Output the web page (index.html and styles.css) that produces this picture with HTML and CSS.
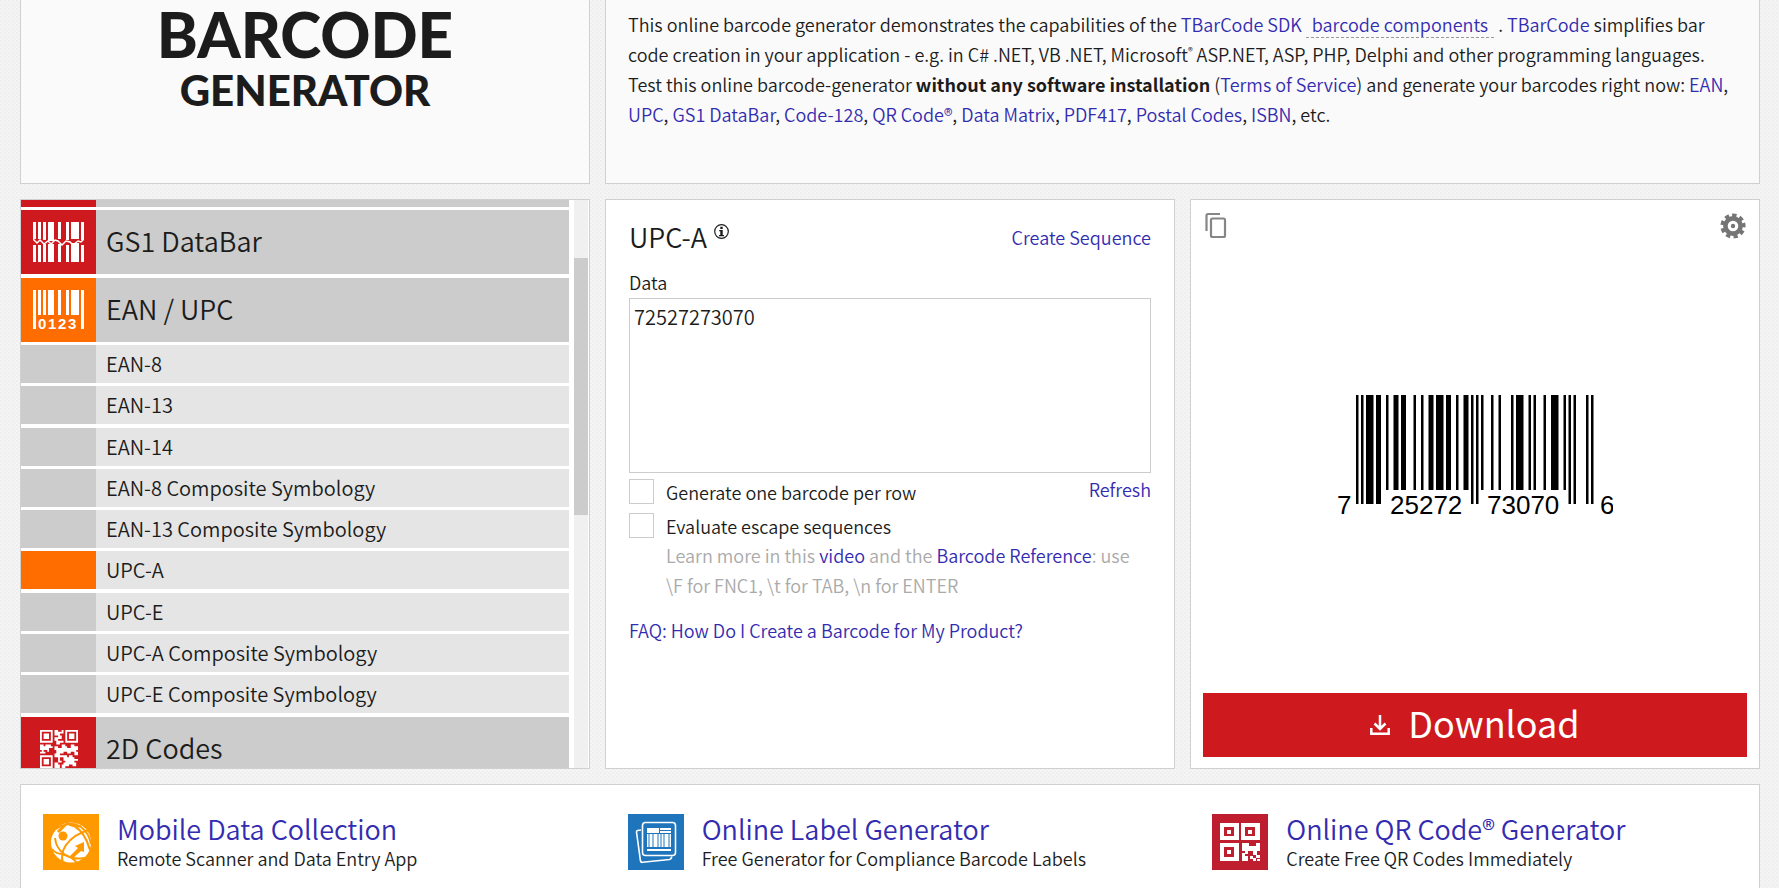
FILE: index.html
```html
<!DOCTYPE html>
<html lang="en">
<head>
<meta charset="utf-8">
<title>Barcode Generator</title>
<link rel="stylesheet" href="styles.css">
</head>
<body>
<main class="page">
  <section class="row intro">
    <header class="panel soft brand">
      <h1 class="brand-title"><span class="brand-big">BARCODE</span><span class="brand-small">GENERATOR</span></h1>
    </header>
    <div class="panel soft about">
      <p>This online barcode generator demonstrates the capabilities of the <a href="#">TBarCode SDK</a> <a class="dashed" href="#">barcode components</a> . <a href="#">TBarCode</a> simplifies bar code creation in your application - e.g. in C# .NET, VB .NET, Microsoft<sup class="reg">®</sup> ASP.NET, ASP, PHP, Delphi and other programming languages. Test this online barcode-generator <strong>without any software installation</strong> (<a href="#">Terms of Service</a>) and generate your barcodes right now: <a href="#">EAN</a>, <a href="#">UPC</a>, <a href="#">GS1 DataBar</a>, <a href="#">Code-128</a>, <a href="#">QR Code®</a>, <a href="#">Data Matrix</a>, <a href="#">PDF417</a>, <a href="#">Postal Codes</a>, <a href="#">ISBN</a>, etc.</p>
    </div>
  </section>

  <section class="row tools">
    <nav class="panel types">
      <ul class="groups">
        <li class="group red"><span class="mark"></span><span class="name"></span></li>
        <li class="group red">
          <span class="mark">
            <svg width="51" height="40" viewBox="0 0 51 40" fill="#fff">
              <path d="M0 0h3v17H0zM5 0h3v17H5zM10 0h3v18h-3zM15 0h6v19h-6zM25 0h3v17h-3zM33 0h3v18h-3zM38 0h8v17h-8zM48 0h3v18h-3zM0 23h3v17H0zM5 23h3v17H5zM10 22h3v18h-3zM15 22h6v18h-6zM25 22h3v18h-3zM33 23h3v17h-3zM38 21h8v19h-8zM48 23h3v17h-3z"/>
              <path d="M0 17l4 4 3-3 4 4 4-3 3 3 4-4 3 1 4 4 4-4 4 1 3 3 5-4 3 1 3-3" fill="none" stroke="#fff" stroke-width="1.500"/>
            </svg>
          </span>
          <span class="name">GS1 DataBar</span>
        </li>
        <li class="group orange">
          <span class="mark">
            <svg width="51" height="40" viewBox="0 0 51 40" fill="#fff">
              <path d="M0 0h3v39H0zM5 0h3v25H5zM10 0h3v25h-3zM15 0h6v25h-6zM25 0h3v25h-3zM33 0h3v25h-3zM38 0h8v25h-8zM48 0h3v39h-3z"/>
              <text class="mark-digits" x="5 15 25 35" y="39">0123</text>
            </svg>
          </span>
          <span class="name">EAN / UPC</span>
        </li>
        <li>
          <ul class="subs">
            <li class="sub"><span class="mark"></span><span class="name">EAN-8</span></li>
            <li class="sub"><span class="mark"></span><span class="name">EAN-13</span></li>
            <li class="sub"><span class="mark"></span><span class="name">EAN-14</span></li>
            <li class="sub"><span class="mark"></span><span class="name">EAN-8 Composite Symbology</span></li>
            <li class="sub"><span class="mark"></span><span class="name">EAN-13 Composite Symbology</span></li>
            <li class="sub current"><span class="mark"></span><span class="name">UPC-A</span></li>
            <li class="sub"><span class="mark"></span><span class="name">UPC-E</span></li>
            <li class="sub"><span class="mark"></span><span class="name">UPC-A Composite Symbology</span></li>
            <li class="sub"><span class="mark"></span><span class="name">UPC-E Composite Symbology</span></li>
          </ul>
        </li>
        <li class="group red">
          <span class="mark">
            <svg width="38" height="38" viewBox="0 0 21 21" fill="#fff" fill-rule="evenodd">
              <path d="M0 0h7v7H0zM1 1v5h5V1zM2 2h3v3H2zM14 0h7v7h-7zM15 1v5h5V1zM16 2h3v3h-3zM0 14h7v7H0zM1 15v5h5v-5zM2 16h3v3H2z"/>
              <path d="M8 0h2v1h2V0h1v2h-2v1h1v2h-2v1h3v1h-2v1h-2V6H8V4h2V3H8zM0 8h2v1h1V8h3v1h1v1H5v2H4v-1H2v1h1v1H0v-1h1v-1H0zM8 9h2v1h2V8h2v1h1v1h2V8h2v1h2v2h-1v1h1v2h-2v-2h-2v1h-2v-1h-2v1h-2v1h2v1h-2v2h1v1h-2v-3H8v-2h1v-2H8zM13 14h2v1h1v-1h2v1h1v1h2v1h-2v1h1v2h-2v-1h-2v1h-2v-1h-1v-1h1v-1h-1zM8 18h2v1h1v2H8zM12 19h2v2h-2z"/>
            </svg>
          </span>
          <span class="name">2D Codes</span>
        </li>
      </ul>
      <div class="track"><div class="thumb"></div></div>
    </nav>

    <form class="panel editor">
      <div class="line editor-head">
        <h2 class="editor-title">UPC-A <svg class="info" width="15" height="15" viewBox="0 0 15 15"><circle cx="7.5" cy="7.5" r="6.8" fill="none" stroke="#1c1c1c" stroke-width="1.200"/><path d="M6.300 2.800h2.400v2.200H6.300zM5.200 6h3.500v5h1.300v1.200H5V11h1.300V7.200H5.200z" fill="#1c1c1c"/></svg></h2>
        <a href="#">Create Sequence</a>
      </div>
      <label class="data-label" for="data">Data</label>
      <textarea class="data" id="data">72527273070</textarea>
      <div class="line">
        <label class="check"><input type="checkbox"> Generate one barcode per row</label>
        <a class="refresh" href="#">Refresh</a>
      </div>
      <label class="check"><input type="checkbox"> Evaluate escape sequences</label>
      <p class="hint">Learn more in this <a href="#">video</a> and the <a href="#">Barcode Reference</a>: use \F for FNC1, \t for TAB, \n for ENTER</p>
      <p class="faq"><a href="#">FAQ: How Do I Create a Barcode for My Product?</a></p>
    </form>

    <div class="panel result">
      <div class="line">
        <button class="icon-button" type="button" aria-label="Copy">
          <svg width="25" height="27" viewBox="0 0 25 27" fill="none" stroke="#868686" stroke-width="2.200"><path d="M2.500 19V3.500Q2.500 2 4 2H16"/><rect x="7" y="6.500" width="14" height="18.500" rx="1.500"/></svg>
        </button>
        <button class="icon-button" type="button" aria-label="Settings">
          <svg width="26" height="26" viewBox="-13 -13 26 26"><g fill="none" stroke="#757575"><circle r="7.600" stroke-width="4.600"/><circle r="10.600" stroke-width="4" stroke-dasharray="4.200 3.200" transform="rotate(-16)"/></g><circle r="2.200" fill="#757575"/></svg>
        </button>
      </div>
      <svg class="barcode" width="276" height="128" viewBox="0 0 276 128">
        <g transform="translate(19 0) scale(2.500 1)">
          <path d="M0 0h1v109H0zM2 0h1v109H2zM4 0h3v109H4zM8 0h2v109H8zM12 0h1v95h-1zM15 0h2v95h-2zM18 0h2v95h-2zM23 0h1v95h-1zM26 0h1v95h-1zM29 0h2v95h-2zM32 0h3v95h-3zM36 0h2v95h-2zM40 0h1v95h-1zM43 0h2v95h-2zM46 0h1v109h-1zM48 0h1v109h-1zM50 0h1v95h-1zM54 0h1v95h-1zM57 0h1v95h-1zM62 0h1v95h-1zM64 0h3v95h-3zM69 0h1v95h-1zM71 0h1v95h-1zM75 0h1v95h-1zM78 0h3v95h-3zM83 0h1v95h-1zM85 0h1v109h-1zM87 0h1v109h-1zM92 0h1v109h-1zM94 0h1v109h-1z"/>
        </g>
        <g class="barcode-digits"><text x="0" y="119">7</text><text x="53" y="119">25272</text><text x="150" y="119">73070</text><text x="263" y="119">6</text></g>
      </svg>
      <button class="download" type="button">
        <svg width="20" height="20" viewBox="0 0 20 20" fill="none" stroke="#fff" stroke-width="2.500"><path d="M10 0v14M4.500 8.500L10 14l5.500-5.500M1.300 13v5.700h17.400V13"/></svg>
        <span class="download-text">Download</span>
      </button>
    </div>
  </section>

  <section class="panel products row">
    <article class="product">
      <svg width="56" height="56" viewBox="0 0 56 56">
        <path fill="#ff9900" d="M0 0h56v56H0z"/>
        <circle cx="28" cy="28.500" r="20" fill="#fff"/>
        <g fill="none" stroke="#ff9900" stroke-width="2"><path d="M8 22Q11 13 22 11Q30 8 38 13Q46 19 48 30M22 8Q30 14 38 12M9 35Q13 40 19 40Q30 43 34 49M20 49Q17 40 23 31Q31 20 46 16M12 24Q13 34 21 40Q28 46 44 44M31 12Q42 18 47 36"/></g>
        <path d="M15 18L22 11" stroke="#ff9900" stroke-width="3"/>
        <circle cx="20" cy="22" r="4.500" fill="#ff9900"/>
        <path fill="#ff9900" d="M41 28v10l-3-1-9 8-2-3 8-8-3-2z"/>
      </svg>
      <div><h3 class="product-title"><a href="#">Mobile Data Collection</a></h3><p class="product-text">Remote Scanner and Data Entry App</p></div>
    </article>
    <article class="product">
      <svg width="56" height="56" viewBox="0 0 56 56">
        <path fill="#1e75bc" d="M0 0h56v56H0z"/>
        <g fill="none" stroke="#fff" stroke-width="1.600"><path d="M13 16l-3.500.5q-1 .3-1 1.500l4 29q.3 1.500 2 1.300l27-2.800q2-.3 2.200-3"/><rect x="14.500" y="8.500" width="33" height="33" rx="3"/></g>
        <path fill="#fff" d="M19 14h12v5H19zM32 14h11v2H32zM32 17h11v2H32zM19 35h24v2H19z"/><path fill="#8fbbe0" d="M19 20h24v13H19z"/><path fill="#fff" d="M19 20h1v13h-1zM22 20h2v13h-2zM26 20h3v13h-3zM31 20h1v13h-1zM34 20h1v13h-1zM37 20h3v13h-3zM42 20h1v13h-1z"/>
      </svg>
      <div><h3 class="product-title"><a href="#">Online Label Generator</a></h3><p class="product-text">Free Generator for Compliance Barcode Labels</p></div>
    </article>
    <article class="product">
      <svg width="56" height="56" viewBox="0 0 56 56">
        <path fill="#be1e2d" d="M0 0h56v56H0z"/>
        <path fill="#fff" fill-rule="evenodd" d="M8 9h19v17H8zM12 13v9h10v-9zM29 9h19v17H29zM33 13v9h10v-9zM8 29h19v18H8zM12 33v10h10V33z"/>
        <path fill="#fff" d="M15 16h4v4h-4zM36 16h4v4h-4zM15 36h4v4h-4zM30 29h7v3h7v-3h4v8h-3v4h3v3h-4v-3h-3v-4h-5v3h-3v-3h-3zM30 39h3v3h3v5h-6zM38 42h3v2h3v3h-3v-2h-3zM45 45h3v2h-3z"/>
      </svg>
      <div><h3 class="product-title"><a href="#">Online QR Code® Generator</a></h3><p class="product-text">Create Free QR Codes Immediately</p></div>
    </article>
  </section>
</main>
</body>
</html>
```
FILE: styles.css
```css
* { box-sizing: border-box; }

body {
  margin: 0;
  color: #1c1c1c;
  background-color: #f5f5f5;
  background-image:
    radial-gradient(circle at 1px 1px, #eeeeee 1px, transparent 1px),
    radial-gradient(circle at 3px 3px, #f0f0f0 1px, transparent 1px);
  background-size: 4px 4px;
  font: 350 18px/30px "Noto Sans CJK SC", "Open Sans", sans-serif;
  height: 100vh;
  overflow: hidden;
}

h1, h2, h3, p, ul { margin: 0; padding: 0; font-weight: inherit; }
ul { list-style: none; }
a { color: #332cb0; text-decoration: none; }
strong { font-weight: 700; }
svg { display: block; flex: none; }

.page { display: flex; flex-direction: column; gap: 15px; padding: 0 19px 0 20px; }
.row { display: grid; grid-template-columns: repeat(3, 1fr); gap: 15px; }
.panel { background: #fff; border: 1px solid #d0d0d0; min-width: 0; }
.soft { background: #fafafa; border-top: 0; }
.line { display: flex; justify-content: space-between; align-items: center; }

/* Intro */
.intro { min-height: 184px; }
.brand { text-align: center; }
.brand-title { font-family: Lato, sans-serif; font-weight: 900; }
.brand-big { display: block; font-size: 62px; line-height: 68px; }
.brand-small { display: block; font-size: 42px; line-height: 44px; }
.about { grid-column: span 2; padding: 9px 22px; }
.dashed { border-bottom: 1px dashed #999; padding: 0 6px; }
.reg { font-size: 10px; line-height: 0; }

/* Barcode types */
.tools > .panel { aspect-ratio: 1; min-height: 0; }
.types { display: flex; gap: 5px; overflow: hidden; }
.groups { flex: 1; margin-top: -57px; }
.group, .sub { display: flex; }
.group { height: 64px; margin-bottom: 4px; background: #ccc; font-size: 27px; line-height: 62px; }
.group:first-child, .group.orange { margin-bottom: 3px; }
.mark { width: 75px; flex: none; display: flex; align-items: center; justify-content: center; background: #ccc; }
.red .mark { background: #ce191e; }
.orange .mark, .current .mark { background: #ff6c00; }
.mark-digits { font: 700 15px "Liberation Sans", sans-serif; }
.name { padding-left: 10px; }
.subs { display: flex; flex-direction: column; justify-content: space-between; min-height: 368px; margin-bottom: 4px; }
.sub { height: 38px; background: #e5e5e5; font-size: 20px; line-height: 37px; }
.track { width: 14px; margin-right: 1px; background: #f0f0f0; padding-top: 58px; }
.thumb { height: 257px; background: #ccc; }

/* Editor */
.editor { padding: 18px 23px; }
.editor-head { min-height: 38px; }
.editor-title { display: flex; gap: 7px; font-size: 27px; line-height: 38px; }
.info { margin-top: 6px; }
.data-label { display: block; margin-top: 10px; line-height: 32px; }
.data {
  display: block; width: 100%; height: 175px; margin-bottom: 6px; padding: 3px 4px;
  border: 1px solid #ccc; resize: none; outline: 0; background: #fff;
  color: inherit; font: inherit; font-size: 20px; line-height: 30px;
}
.check { display: flex; align-items: center; gap: 12px; height: 25px; margin-bottom: 9px; line-height: 24px; }
.check input { appearance: none; width: 25px; height: 25px; margin: 0; border: 1px solid #ccc; background: #fff; }
.refresh { align-self: flex-start; line-height: 20px; }
.editor > .check { margin-bottom: 2px; }
.hint { margin-bottom: 15px; padding: 0 16px 0 37px; color: #aaa; }

/* Result */
.result { display: flex; flex-direction: column; padding: 11px 12px; }
.icon-button { padding: 1px; border: 0; background: none; }
.barcode { align-self: center; margin: auto; }
.barcode-digits { font: 400 26px "Liberation Sans", Arial, sans-serif; }
.download {
  display: flex; align-items: center; justify-content: center; gap: 18px; height: 64px; margin-top: 16px;
  border: 0; background: #ce191e; color: #fff; font: inherit; font-weight: 400; font-size: 36px; line-height: 60px;
}
.download-text { padding-bottom: 6px; }

/* Products */
.products { gap: 16px; }
.product { display: flex; gap: 18px; padding: 29px 0 24px 22px; min-height: 140px; }
.product-title { font-size: 27px; line-height: 30px; }
.product-text { line-height: 28px; }
```
